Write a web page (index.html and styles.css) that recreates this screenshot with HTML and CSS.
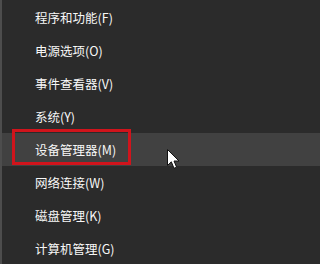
FILE: index.html
```html
<!DOCTYPE html>
<html lang="zh">
<head>
<meta charset="utf-8">
<link rel="stylesheet" href="styles.css">
</head>
<body>
<div class="menu">
  <ul class="items">
    <li class="item">程序和功能(F)</li>
    <li class="item">电源选项(O)</li>
    <li class="item">事件查看器(V)</li>
    <li class="item">系统(Y)</li>
    <li class="item item-hover">设备管理器(M)</li>
    <li class="item">网络连接(W)</li>
    <li class="item">磁盘管理(K)</li>
    <li class="item">计算机管理(G)</li>
  </ul>
  <div class="highlight-box"></div>
  <svg class="cursor" width="13" height="21" viewBox="0 0 13 21">
    <path d="M0.5 0.5 L0.5 16.5 L4.3 12.8 L7 19.3 L9.6 18.2 L7 12 L12 12 Z" fill="#fff" stroke="#111" stroke-width="1" stroke-linejoin="miter"/>
  </svg>
</div>
</body>
</html>
```

FILE: styles.css
```css
html, body {
  margin: 0;
  padding: 0;
  background: #2b2b2b;
}
.menu {
  position: relative;
  width: 100%;
  height: 264px;
  box-sizing: border-box;
  border-left: 2px solid #4d4d4d;
  background: #2b2b2b;
  overflow: hidden;
}
.items {
  list-style: none;
  margin: 0;
  padding: 1px 0 0 0;
}
.item {
  height: 33px;
  line-height: 33px;
  padding-left: 33px;
  color: #f7f7f7;
  font-family: "Noto Sans CJK SC", "Noto Sans", sans-serif;
  font-size: 12.5px;
  white-space: nowrap;
}
.item-hover {
  background: #414141;
}
.highlight-box {
  position: absolute;
  left: 10px;
  top: 129px;
  width: 119px;
  height: 36px;
  box-sizing: border-box;
  border: 3px solid #d0141c;
}
.cursor {
  position: absolute;
  left: 165px;
  top: 149px;
}
```
